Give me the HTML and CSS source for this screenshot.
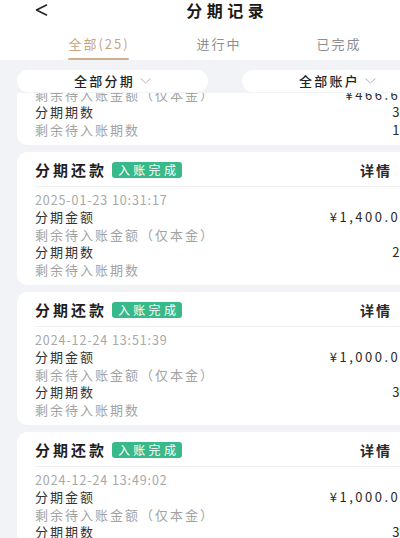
FILE: index.html
```html
<!DOCTYPE html>
<html lang="zh-CN">
<head>
<meta charset="utf-8">
<title>分期记录</title>
<link rel="stylesheet" href="styles.css">
</head>
<body>
<div class="screen">
  <header class="nav">
    <svg class="back" width="13" height="12" viewBox="0 0 13 12"><path d="M11.5 1 L1.5 6 L11.5 11" fill="none" stroke="#222" stroke-width="1.6" stroke-linecap="round" stroke-linejoin="round"/></svg>
    <h1 class="nav-title">分期记录</h1>
  </header>
  <nav class="tabs">
    <div class="tab active"><span class="tab-text">全部(25)</span><span class="tab-line"></span></div>
    <div class="tab"><span class="tab-text">进行中</span><span class="tab-line"></span></div>
    <div class="tab"><span class="tab-text">已完成</span><span class="tab-line"></span></div>
  </nav>
  <div class="filters">
    <div class="pill"><span class="pill-text">全部分期</span><svg class="chev" width="11" height="6" viewBox="0 0 11 6"><path d="M0.5 0.5 L5.5 5 L10.5 0.5" fill="none" stroke="#b5b5b5" stroke-width="1"/></svg></div>
    <div class="pill"><span class="pill-text">全部账户</span><svg class="chev" width="11" height="6" viewBox="0 0 11 6"><path d="M0.5 0.5 L5.5 5 L10.5 0.5" fill="none" stroke="#b5b5b5" stroke-width="1"/></svg></div>
  </div>
  <main class="list" id="list">
    <div class="list-inner">
      <section class="card">
        <div class="card-head"><span class="card-title">分期还款</span><span class="badge">入账中</span><span class="spacer"></span><span class="detail">详情</span></div>
        <div class="card-body">
          <div class="row date">2025-02-10 09:12:45</div>
          <div class="row"><span class="label">分期金额</span><span class="value amt">¥1,400.00</span></div>
          <div class="row"><span class="label muted">剩余待入账金额（仅本金）</span><span class="value amt">¥466.67</span></div>
          <div class="row"><span class="label">分期期数</span><span class="value">3</span></div>
          <div class="row"><span class="label muted">剩余待入账期数</span><span class="value">1</span></div>
        </div>
      </section>
      <section class="card">
        <div class="card-head"><span class="card-title">分期还款</span><span class="badge">入账完成</span><span class="spacer"></span><span class="detail">详情</span></div>
        <div class="card-body">
          <div class="row date">2025-01-23 10:31:17</div>
          <div class="row"><span class="label">分期金额</span><span class="value amt">¥1,400.00</span></div>
          <div class="row"><span class="label muted">剩余待入账金额（仅本金）</span></div>
          <div class="row"><span class="label">分期期数</span><span class="value">2</span></div>
          <div class="row"><span class="label muted">剩余待入账期数</span></div>
        </div>
      </section>
      <section class="card">
        <div class="card-head"><span class="card-title">分期还款</span><span class="badge">入账完成</span><span class="spacer"></span><span class="detail">详情</span></div>
        <div class="card-body">
          <div class="row date">2024-12-24 13:51:39</div>
          <div class="row"><span class="label">分期金额</span><span class="value amt">¥1,000.00</span></div>
          <div class="row"><span class="label muted">剩余待入账金额（仅本金）</span></div>
          <div class="row"><span class="label">分期期数</span><span class="value">3</span></div>
          <div class="row"><span class="label muted">剩余待入账期数</span></div>
        </div>
      </section>
      <section class="card">
        <div class="card-head"><span class="card-title">分期还款</span><span class="badge">入账完成</span><span class="spacer"></span><span class="detail">详情</span></div>
        <div class="card-body">
          <div class="row date">2024-12-24 13:49:02</div>
          <div class="row"><span class="label">分期金额</span><span class="value amt">¥1,000.00</span></div>
          <div class="row"><span class="label muted">剩余待入账金额（仅本金）</span></div>
          <div class="row"><span class="label">分期期数</span><span class="value">3</span></div>
          <div class="row"><span class="label muted">剩余待入账期数</span></div>
        </div>
      </section>
    </div>
  </main>
</div>
<script src="script.js"></script>
</body>
</html>
```
FILE: styles.css
```css
html, body {
  margin: 0;
  padding: 0;
  overflow: hidden;
  background: #f2f3f6;
}
body {
  font-family: "Noto Sans CJK SC", "Noto Sans", sans-serif;
  color: #222;
}
.screen {
  width: 450px;
  height: 538px;
  display: flex;
  flex-direction: column;
  overflow: hidden;
}
.nav {
  height: 21px;
  background: #fff;
  display: flex;
  align-items: center;
  justify-content: center;
  position: relative;
}
.back {
  position: absolute;
  left: 35px;
  top: 4px;
}
.nav-title {
  margin: 0;
  font-size: 16px;
  line-height: 21px;
  font-weight: 600;
  letter-spacing: 4.5px;
  margin-right: -4.5px;
  color: #1a1a1a;
}
.tabs {
  background: #fff;
  display: flex;
  padding-left: 38px;
  height: 39px;
}
.tab {
  width: 120px;
  display: flex;
  flex-direction: column;
  align-items: center;
  padding-top: 13px;
  box-sizing: border-box;
}
.tab-text {
  font-size: 13px;
  line-height: 20px;
  letter-spacing: 2px;
  margin-right: -2px;
  color: #8e8e8e;
}
.tab-line {
  margin-top: 4px;
  height: 2px;
  width: 61px;
  border-radius: 1px;
}
.tab.active .tab-text { color: #c9a47f; }
.tab.active .tab-line { background: #d2b08e; }
.filters {
  display: flex;
  gap: 34px;
  padding: 10px 17px 1px;
}
.pill {
  width: 191px;
  height: 22px;
  background: #fff;
  border-radius: 11px;
  display: flex;
  align-items: center;
  justify-content: center;
  gap: 7px;
}
.pill-text {
  font-size: 13px;
  line-height: 22px;
  font-weight: 500;
  letter-spacing: 2.3px;
  margin-right: -2px;
  color: #222;
}
.list {
  flex: 1;
  overflow-y: auto;
  scrollbar-width: none;
}
.list::-webkit-scrollbar { display: none; }
.list-inner {
  display: flex;
  flex-direction: column;
  gap: 7px;
  padding: 0 17px 20px;
}
.card {
  background: #fff;
  border-radius: 10px;
  padding: 0 32px 7px 18px;
}
.card-head {
  height: 33px;
  border-bottom: 1px solid #f0f0f0;
  display: flex;
  align-items: center;
  padding-top: 1px;
  margin-bottom: 3.5px;
}
.card-title {
  font-size: 15px;
  font-weight: 700;
  letter-spacing: 3px;
  color: #1f1f1f;
}
.badge {
  margin-left: 5px;
  height: 16px;
  line-height: 16px;
  padding: 0 3px 0 6px;
  background: #38b98a;
  color: #fff;
  font-size: 12px;
  letter-spacing: 3.3px;
  border-radius: 3px;
}
.spacer { flex: 1; }
.detail {
  font-size: 14px;
  font-weight: 700;
  letter-spacing: 2px;
  color: #2a2a2a;
  margin-right: 9px;
}
.row {
  display: flex;
  justify-content: space-between;
  height: 17.5px;
  line-height: 17.5px;
  font-size: 13px;
  letter-spacing: 2px;
  color: #333;
  white-space: nowrap;
}
.row.date {
  font-size: 12.5px;
  letter-spacing: 0.9px;
  color: #a8a8a8;
}
.label.muted { color: #a3a3a3; }
.value {
  letter-spacing: 1.5px;
  color: #2a2a2a;
}
.value.amt {
  letter-spacing: 2.5px;
  margin-right: -9px;
}
```
FILE: script.js
```js
document.getElementById('list').scrollTop = 81;
```
